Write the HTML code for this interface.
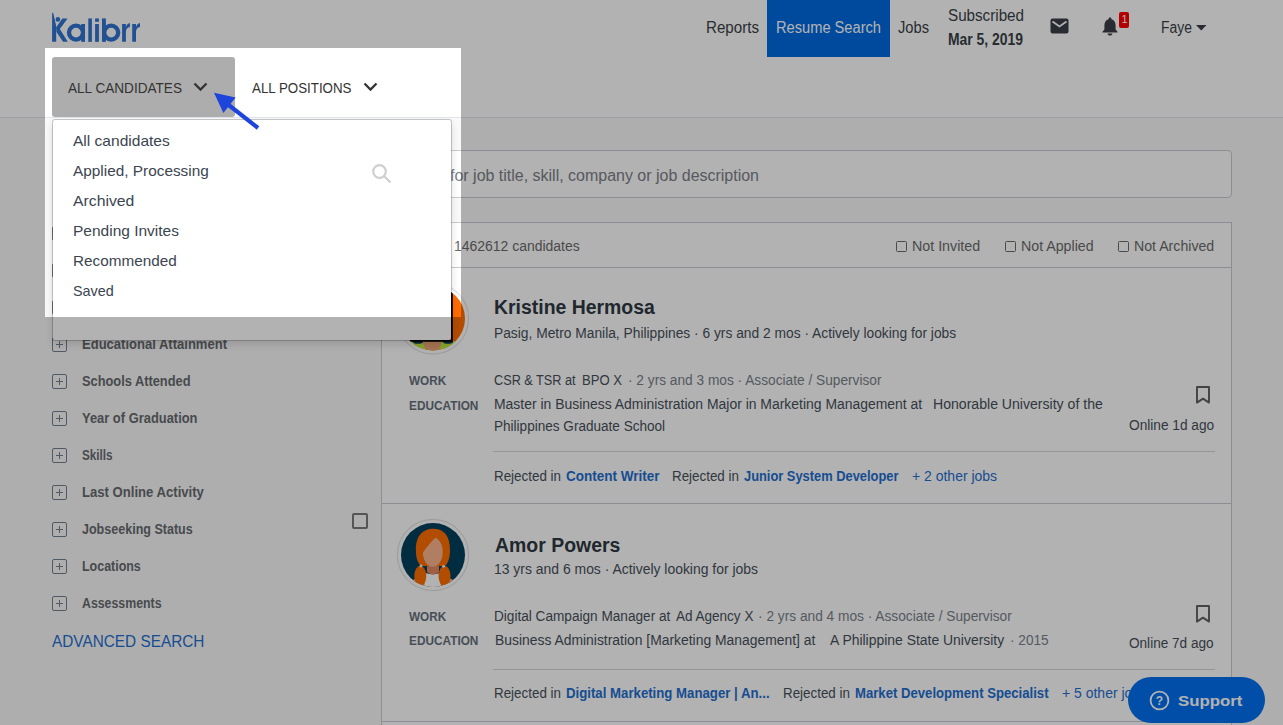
<!DOCTYPE html>
<html><head><meta charset="utf-8">
<style>
html,body{margin:0;padding:0}
body{width:1283px;height:725px;overflow:hidden;position:relative;background:#fafafa;font-family:"Liberation Sans",sans-serif}
.a{position:absolute}
.t{position:absolute;white-space:nowrap;line-height:1;transform-origin:0 0}
.pb{position:absolute;left:52px;width:13px;height:13px;border:1px solid #75818e;border-radius:2px}
.pb:before{content:"";position:absolute;left:3px;top:6px;width:7px;height:1px;background:#75818e}
.pb:after{content:"";position:absolute;left:6px;top:3px;width:1px;height:7px;background:#75818e}
.cb{position:absolute;width:9px;height:9px;border:1.25px solid #6a6a6a;border-radius:1.5px;background:#fff}
.dd{position:absolute;white-space:nowrap;line-height:1;transform-origin:0 0;z-index:6;color:#3b4550;font-size:15px}
</style></head><body>
<!-- header -->
<div class="a" style="left:0;top:0;width:1283px;height:117px;background:#fff"></div>
<div class="a" style="left:0;top:117px;width:1283px;height:1px;background:#e1e6ee"></div>
<!-- logo -->
<svg class="a" style="left:0;top:0" width="150" height="50" viewBox="0 0 150 50"><g fill="#3175d3">
<path d="M52.1 12.6L53.3 13.2L56.2 26V41.85H52.1z"/>
<circle cx="57.9" cy="19.4" r="2.3"/>
<path d="M62.4 18.4H67.6L58.2 31.2L56.2 30.2V27.2z"/>
<path d="M56.2 31.5L58.9 27.6L67.8 41.85H63z"/>
<circle cx="76" cy="32.6" r="7" fill="none" stroke="#3175d3" stroke-width="4.3"/>
<rect x="81.2" y="24" width="3.8" height="17.85"/>
<rect x="88.3" y="18.45" width="3.6" height="23.4"/>
<rect x="95.1" y="18.45" width="3.8" height="3.35"/>
<rect x="95.1" y="24" width="3.8" height="17.85"/>
<rect x="102" y="18.45" width="3.9" height="23.4"/>
<circle cx="111.2" cy="32.6" r="7" fill="none" stroke="#3175d3" stroke-width="4.3"/>
<path d="M122.1 41.85V24H125.9V27C126.6 24.8 128 23.3 129.9 23V26.9C127.4 27.2 125.9 29 125.9 32V41.85z"/>
<path d="M132.2 41.85V24H136V27C136.7 24.8 138.1 23.3 140 23V26.9C137.5 27.2 136 29 136 32V41.85z"/>
</g></svg>
<!-- nav active -->
<div class="a" style="left:767px;top:0;width:123px;height:57px;background:#006ae3"></div>
<!-- envelope -->
<svg class="a" style="left:1050px;top:18px" width="19" height="16" viewBox="0 0 19 16"><rect x="0.5" y="0.5" width="18" height="15" rx="2" fill="#3a4048"/><path d="M2.5 3.5 L9.5 8.5 L16.5 3.5" stroke="#fff" stroke-width="1.8" fill="none"/></svg>
<!-- bell -->
<svg class="a" style="left:1101px;top:16px" width="18" height="20" viewBox="0 0 18 20"><path d="M9 1.5c0.9 0 1.4 0.6 1.4 1.3v0.5c2.8 0.7 4.2 3 4.2 6v4.2l1.9 2.2v0.9H1.5v-0.9l1.9-2.2V9.3c0-3 1.4-5.3 4.2-6V2.8c0-0.7 0.5-1.3 1.4-1.3z" fill="#3a4048"/><path d="M6.6 17.4h4.8c0 1.3-1.1 2.1-2.4 2.1s-2.4-0.8-2.4-2.1z" fill="#3a4048"/></svg>
<div class="a" style="left:1119px;top:12px;width:10px;height:16px;background:#ff0000;border-radius:2px"></div>
<div class="t" style="left:1121.5px;top:13.5px;font-size:11px;color:#fff">1</div>
<!-- caret -->
<svg class="a" style="left:1196px;top:25px" width="11" height="6" viewBox="0 0 11 6"><path d="M0 0H10.5L5.25 5.5z" fill="#3a3f47"/></svg>

<!-- filter bar -->
<div class="a" style="left:52px;top:57px;width:183px;height:60px;background:#adadad;border-radius:3px"></div>
<svg class="a" style="left:192px;top:81px" width="17" height="12" viewBox="0 0 17 12"><path d="M2.5 2.5L8.5 8.5L14.5 2.5" stroke="#333" stroke-width="2.3" fill="none"/></svg>
<svg class="a" style="left:362px;top:81px" width="17" height="12" viewBox="0 0 17 12"><path d="M2.5 2.5L8.5 8.5L14.5 2.5" stroke="#333" stroke-width="2.3" fill="none"/></svg>

<!-- sidebar plus boxes -->
<div class="pb" style="top:226px"></div><div class="pb" style="top:263px"></div><div class="pb" style="top:300px"></div>
<div class="pb" style="top:337px"></div><div class="pb" style="top:374px"></div><div class="pb" style="top:411px"></div>
<div class="pb" style="top:448px"></div><div class="pb" style="top:485px"></div><div class="pb" style="top:522px"></div>
<div class="pb" style="top:559px"></div><div class="pb" style="top:596px"></div>
<div class="a" style="left:352px;top:513px;width:12px;height:12px;border:2px solid #7a7a7a;border-radius:2px"></div>

<!-- search input -->
<div class="a" style="left:381px;top:150px;width:849px;height:46px;border:1px solid #c8ccd2;border-radius:4px;background:#fff"></div>
<!-- results card -->
<div class="a" style="left:381px;top:222px;width:849px;height:600px;border:1px solid #c8ccd2;background:#fff"></div>
<div class="a" style="left:382px;top:267px;width:849px;height:1px;background:#c8ccd2"></div>
<div class="a" style="left:382px;top:503px;width:849px;height:1px;background:#c8ccd2"></div>
<div class="a" style="left:382px;top:721px;width:849px;height:1px;background:#c8ccd2"></div>
<div class="a" style="left:493px;top:451px;width:722px;height:1px;background:#d3d7dc"></div>
<div class="a" style="left:493px;top:669px;width:722px;height:1px;background:#d3d7dc"></div>
<div class="cb" style="left:896px;top:241.3px"></div>
<div class="cb" style="left:1004.7px;top:241.3px"></div>
<div class="cb" style="left:1118.1px;top:241.3px"></div>

<!-- avatar 1 -->
<svg class="a" style="left:395px;top:280px" width="78" height="78" viewBox="0 0 78 78">
<defs><clipPath id="c1"><circle cx="38" cy="38.5" r="32"/></clipPath></defs>
<circle cx="38" cy="38.5" r="35.6" fill="#fff" stroke="#e3e3e3" stroke-width="1.2"/>
<g clip-path="url(#c1)">
<rect x="0" y="0" width="78" height="78" fill="#ff6d00"/>
<rect x="0" y="61" width="78" height="20" fill="#bdf03a"/>
<path d="M27 61.5 H47.5 L43 72 H31.5z" fill="#f0a57a"/>
<ellipse cx="23" cy="62" rx="5" ry="1.8" fill="#0b3a57"/>
<ellipse cx="53" cy="62" rx="5" ry="1.8" fill="#0b3a57"/>
</g>
<g clip-path="url(#c1)"><rect x="56" y="0" width="1.8" height="62" fill="#000"/>
<rect x="0" y="60" width="57.8" height="1.8" fill="#000"/></g>
</svg>
<!-- avatar 2 -->
<svg class="a" style="left:395px;top:517px" width="78" height="78" viewBox="0 0 78 78">
<defs><clipPath id="c2"><circle cx="38" cy="38" r="32"/></clipPath></defs>
<circle cx="38" cy="38" r="35.6" fill="#fff" stroke="#e3e3e3" stroke-width="1.2"/>
<g clip-path="url(#c2)">
<rect x="0" y="0" width="78" height="78" fill="#04405c"/>
<path d="M8 78 C10 66 18 61 30 59 H46 C58 61 66 66 68 78z" fill="#fdb78f"/>
<path d="M29.5 78 V55.5 C34 57.5 42 57.5 45.5 55.5 V78z" fill="#fff"/>
<path d="M32 44 H44 V55 C40 58.5 36 58.5 32 55z" fill="#e58864"/>
<path d="M21 35 C20 19 28 11.8 38 11.8 C49 11.8 55 19 55 33 C55 41 53 46.5 50 49 H26 C23 46.5 21 41 21 35z" fill="#ff6f00"/>
<ellipse cx="37.8" cy="35" rx="9.9" ry="14.8" fill="#fdb78f"/>
<path d="M27 34 C27.5 25 32 19.5 43.5 17.5 C39 22.5 33 27.5 27 37z" fill="#ff6f00"/>
<path d="M43 17.5 C47 18 49 22 48.5 28 L46 22z" fill="#ff6f00"/>
<ellipse cx="25.3" cy="59" rx="6" ry="10.2" fill="#ff6f00"/>
<ellipse cx="49.5" cy="59" rx="6" ry="10.2" fill="#ff6f00"/>
<circle cx="26" cy="49" r="1.4" fill="#f2f2f2"/><circle cx="48.5" cy="49.3" r="1.4" fill="#f2f2f2"/>
</g>
</svg>
<!-- bookmarks -->
<svg class="a" style="left:1195px;top:385px" width="16" height="20" viewBox="0 0 16 20"><path d="M2 2H14V17.6L8 13.6L2 17.6z" stroke="#606060" stroke-width="1.9" fill="none" stroke-linejoin="round"/></svg>
<svg class="a" style="left:1195px;top:604px" width="16" height="20" viewBox="0 0 16 20"><path d="M2 2H14V17.6L8 13.6L2 17.6z" stroke="#606060" stroke-width="1.9" fill="none" stroke-linejoin="round"/></svg>

<div id='t0' class='t' style='left:706px;top:20px;font-size:16px;font-weight:400;color:#3a3f47;transform:scaleX(0.9459);'>Reports</div>
<div id='t1' class='t' style='left:776px;top:20px;font-size:16px;font-weight:400;color:#ffffff;transform:scaleX(0.9153);'>Resume Search</div>
<div id='t2' class='t' style='left:898px;top:20px;font-size:16px;font-weight:400;color:#3a3f47;transform:scaleX(0.9172);'>Jobs</div>
<div id='t3' class='t' style='left:948px;top:8px;font-size:16px;font-weight:400;color:#3a3f47;transform:scaleX(0.9494);'>Subscribed</div>
<div id='t4' class='t' style='left:948px;top:32px;font-size:16px;font-weight:700;color:#3a3f47;transform:scaleX(0.8693);'>Mar 5, 2019</div>
<div id='t5' class='t' style='left:1161px;top:20px;font-size:16px;font-weight:400;color:#3a3f47;transform:scaleX(0.8713);'>Faye</div>
<div id='t6' class='t' style='left:68px;top:81px;font-size:14px;font-weight:400;color:#333333;transform:scaleX(0.9703);'>ALL CANDIDATES</div>
<div id='t7' class='t' style='left:252px;top:81px;font-size:14px;font-weight:400;color:#333333;transform:scaleX(0.9520);'>ALL POSITIONS</div>
<div id='t8' class='t' style='left:82px;top:226px;font-size:14px;font-weight:700;color:#676b70;'>Keywords</div>
<div id='t9' class='t' style='left:82px;top:263px;font-size:14px;font-weight:700;color:#676b70;'>Work Experience</div>
<div id='t10' class='t' style='left:82px;top:300px;font-size:14px;font-weight:700;color:#676b70;'>Job Functions</div>
<div id='t11' class='t' style='left:82px;top:337px;font-size:14px;font-weight:700;color:#676b70;transform:scaleX(0.9305);'>Educational Attainment</div>
<div id='t12' class='t' style='left:82px;top:374px;font-size:14px;font-weight:700;color:#676b70;transform:scaleX(0.9156);'>Schools Attended</div>
<div id='t13' class='t' style='left:82px;top:411px;font-size:14px;font-weight:700;color:#676b70;transform:scaleX(0.9222);'>Year of Graduation</div>
<div id='t14' class='t' style='left:82px;top:448px;font-size:14px;font-weight:700;color:#676b70;transform:scaleX(0.8362);'>Skills</div>
<div id='t15' class='t' style='left:82px;top:485px;font-size:14px;font-weight:700;color:#676b70;transform:scaleX(0.9363);'>Last Online Activity</div>
<div id='t16' class='t' style='left:82px;top:522px;font-size:14px;font-weight:700;color:#676b70;transform:scaleX(0.8949);'>Jobseeking Status</div>
<div id='t17' class='t' style='left:82px;top:559px;font-size:14px;font-weight:700;color:#676b70;transform:scaleX(0.8892);'>Locations</div>
<div id='t18' class='t' style='left:82px;top:596px;font-size:14px;font-weight:700;color:#676b70;transform:scaleX(0.8806);'>Assessments</div>
<div id='t19' class='t' style='left:52.4px;top:634px;font-size:16px;font-weight:400;color:#1f6fd0;transform:scaleX(0.9594);'>ADVANCED SEARCH</div>
<div id='t20' class='t' style='left:450px;top:168px;font-size:16px;font-weight:400;color:#7b8088;transform:scaleX(0.9985);'>for job title, skill, company or job description</div>
<div id='t21' class='t' style='left:454px;top:239px;font-size:14px;font-weight:400;color:#6b6b6b;transform:scaleX(0.9968);'>1462612 candidates</div>
<div id='t22' class='t' style='left:912.2px;top:239px;font-size:14px;font-weight:400;color:#6b6b6b;transform:scaleX(1.0189);'>Not Invited</div>
<div id='t23' class='t' style='left:1021px;top:239px;font-size:14px;font-weight:400;color:#6b6b6b;transform:scaleX(1.0138);'>Not Applied</div>
<div id='t24' class='t' style='left:1134.2px;top:239px;font-size:14px;font-weight:400;color:#6b6b6b;transform:scaleX(1.0104);'>Not Archived</div>
<div id='t25' class='t' style='left:494.2px;top:297px;font-size:20px;font-weight:700;color:#2f3842;transform:scaleX(0.9709);'>Kristine Hermosa</div>
<div id='t26' class='t' style='left:494px;top:326px;font-size:14px;font-weight:400;color:#47505a;transform:scaleX(0.9850);'>Pasig, Metro Manila, Philippines · 6 yrs and 2 mos · Actively looking for jobs</div>
<div id='t27' class='t' style='left:408.8px;top:374px;font-size:13px;font-weight:700;color:#66717c;transform:scaleX(0.9060);'>WORK</div>
<div id='t28' class='t' style='left:408.8px;top:399px;font-size:13px;font-weight:700;color:#66717c;transform:scaleX(0.9094);'>EDUCATION</div>
<div id='t29' class='t' style='left:494px;top:373px;font-size:14px;font-weight:400;color:#47505a;transform:scaleX(0.9067);'>CSR &amp; TSR at</div>
<div id='t30' class='t' style='left:581.7px;top:373px;font-size:14px;font-weight:400;color:#47505a;transform:scaleX(0.9346);'>BPO X</div>
<div id='t31' class='t' style='left:628px;top:373px;font-size:14px;font-weight:400;color:#7a828b;transform:scaleX(0.9784);'>· 2 yrs and 3 mos · Associate / Supervisor</div>
<div id='t32' class='t' style='left:494px;top:397px;font-size:14px;font-weight:400;color:#47505a;transform:scaleX(0.9951);'>Master in Business Administration Major in Marketing Management at</div>
<div id='t33' class='t' style='left:933.1px;top:397px;font-size:14px;font-weight:400;color:#47505a;transform:scaleX(1.0055);'>Honorable University of the</div>
<div id='t34' class='t' style='left:494px;top:419px;font-size:14px;font-weight:400;color:#47505a;transform:scaleX(0.9685);'>Philippines Graduate School</div>
<div id='t35' class='t' style='left:1129.3px;top:418px;font-size:14px;font-weight:400;color:#47505a;transform:scaleX(0.9772);'>Online 1d ago</div>
<div id='t36' class='t' style='left:494px;top:469px;font-size:14px;font-weight:400;color:#47505a;transform:scaleX(0.9565);'>Rejected in</div>
<div id='t37' class='t' style='left:565.8px;top:469px;font-size:14px;font-weight:700;color:#1f6fd0;transform:scaleX(0.9653);'>Content Writer</div>
<div id='t38' class='t' style='left:672.4px;top:469px;font-size:14px;font-weight:400;color:#47505a;transform:scaleX(0.9551);'>Rejected in</div>
<div id='t39' class='t' style='left:744.2px;top:469px;font-size:14px;font-weight:700;color:#1f6fd0;transform:scaleX(0.9187);'>Junior System Developer</div>
<div id='t40' class='t' style='left:911.6px;top:469px;font-size:14px;font-weight:400;color:#1f6fd0;transform:scaleX(0.9984);'>+ 2 other jobs</div>
<div id='t41' class='t' style='left:495.2px;top:535px;font-size:20px;font-weight:700;color:#2f3842;transform:scaleX(0.9726);'>Amor Powers</div>
<div id='t42' class='t' style='left:494px;top:562px;font-size:14px;font-weight:400;color:#47505a;transform:scaleX(0.9949);'>13 yrs and 6 mos · Actively looking for jobs</div>
<div id='t43' class='t' style='left:408.8px;top:610px;font-size:13px;font-weight:700;color:#66717c;transform:scaleX(0.9060);'>WORK</div>
<div id='t44' class='t' style='left:408.8px;top:634px;font-size:13px;font-weight:700;color:#66717c;transform:scaleX(0.9094);'>EDUCATION</div>
<div id='t45' class='t' style='left:494.2px;top:609px;font-size:14px;font-weight:400;color:#47505a;transform:scaleX(0.9723);'>Digital Campaign Manager at</div>
<div id='t46' class='t' style='left:676.3px;top:609px;font-size:14px;font-weight:400;color:#47505a;transform:scaleX(0.9654);'>Ad Agency X</div>
<div id='t47' class='t' style='left:757.7px;top:609px;font-size:14px;font-weight:400;color:#7a828b;transform:scaleX(0.9795);'>· 2 yrs and 4 mos · Associate / Supervisor</div>
<div id='t48' class='t' style='left:495.1px;top:633px;font-size:14px;font-weight:400;color:#47505a;transform:scaleX(0.9921);'>Business Administration [Marketing Management] at</div>
<div id='t49' class='t' style='left:830.3px;top:633px;font-size:14px;font-weight:400;color:#47505a;transform:scaleX(0.9949);'>A Philippine State University</div>
<div id='t50' class='t' style='left:1010.3px;top:633px;font-size:14px;font-weight:400;color:#7a828b;transform:scaleX(0.9722);'>· 2015</div>
<div id='t51' class='t' style='left:1129.4px;top:636px;font-size:14px;font-weight:400;color:#47505a;transform:scaleX(0.9703);'>Online 7d ago</div>
<div id='t52' class='t' style='left:494px;top:686px;font-size:14px;font-weight:400;color:#47505a;transform:scaleX(0.9565);'>Rejected in</div>
<div id='t53' class='t' style='left:566px;top:686px;font-size:14px;font-weight:700;color:#1f6fd0;transform:scaleX(0.9436);'>Digital Marketing Manager | An...</div>
<div id='t54' class='t' style='left:782.8px;top:686px;font-size:14px;font-weight:400;color:#47505a;transform:scaleX(0.9551);'>Rejected in</div>
<div id='t55' class='t' style='left:854.7px;top:686px;font-size:14px;font-weight:700;color:#1f6fd0;transform:scaleX(0.9385);'>Market Development Specialist</div>
<div id='t56' class='t' style='left:1062.4px;top:686px;font-size:14px;font-weight:400;color:#1f6fd0;transform:scaleX(0.9984);'>+ 5 other jobs</div>

<!-- dropdown -->
<div class="a" style="left:52px;top:119px;width:398px;height:220px;background:#fff;background-clip:padding-box;border:1px solid rgba(0,0,0,.2);border-radius:3px;box-shadow:0 4px 8px rgba(0,0,0,.12);z-index:5"></div>
<div id='t57' class='t' style='left:73.2px;top:133px;font-size:15px;font-weight:400;color:#3b4550;transform:scaleX(1.0363);z-index:6;'>All candidates</div>
<div id='t58' class='t' style='left:73.2px;top:163px;font-size:15px;font-weight:400;color:#3b4550;transform:scaleX(1.0243);z-index:6;'>Applied, Processing</div>
<div id='t59' class='t' style='left:73.2px;top:193px;font-size:15px;font-weight:400;color:#3b4550;transform:scaleX(1.0504);z-index:6;'>Archived</div>
<div id='t60' class='t' style='left:73.2px;top:223px;font-size:15px;font-weight:400;color:#3b4550;transform:scaleX(1.0334);z-index:6;'>Pending Invites</div>
<div id='t61' class='t' style='left:73.2px;top:253px;font-size:15px;font-weight:400;color:#3b4550;transform:scaleX(1.0195);z-index:6;'>Recommended</div>
<div id='t62' class='t' style='left:73.2px;top:283px;font-size:15px;font-weight:400;color:#3b4550;transform:scaleX(0.9589);z-index:6;'>Saved</div>
<!-- search icon -->
<svg class="a" style="left:371px;top:163px;z-index:6" width="22" height="22" viewBox="0 0 22 22"><circle cx="8.5" cy="8.5" r="6.3" stroke="#cfcfcf" stroke-width="2.2" fill="none"/><path d="M13 13L19.5 19.5" stroke="#cfcfcf" stroke-width="2.3"/></svg>

<!-- overlay with hole -->
<div class="a" style="left:45px;top:48px;width:416px;height:269px;box-shadow:0 0 0 3000px rgba(0,0,0,.3);z-index:10"></div>
<!-- arrow -->
<svg class="a" style="left:205px;top:85px;z-index:11" width="60" height="50" viewBox="205 85 60 50"><path d="M214 92.8L235.6 97.4L223.4 113.1z" fill="#1e44dc"/><path d="M228 104.5L258 128" stroke="#1e44dc" stroke-width="4.2"/></svg>
<!-- support -->
<div class="a" style="left:1128px;top:677px;width:137px;height:46px;border-radius:23px;background:#0070ef;z-index:8"></div>
<svg class="a" style="left:1149px;top:690px;z-index:9" width="21" height="21" viewBox="0 0 21 21"><circle cx="10.5" cy="10.5" r="8.9" stroke="#fff" stroke-width="1.8" fill="none"/><text x="10.5" y="15" text-anchor="middle" font-family="Liberation Sans" font-size="12" font-weight="700" fill="#fff">?</text></svg>
<div id='t63' class='t' style='left:1177.8px;top:693px;font-size:15px;font-weight:700;color:#ffffff;transform:scaleX(1.1200);z-index:9;'>Support</div>
</body></html>
